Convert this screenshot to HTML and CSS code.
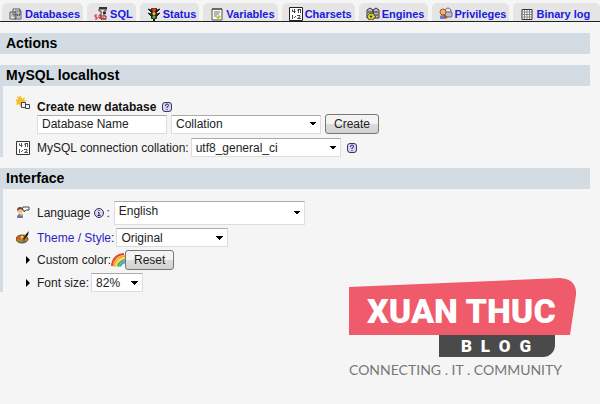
FILE: index.html
```html
<!DOCTYPE html>
<html lang="en">
<head>
<meta charset="utf-8">
<title>MySQL localhost</title>
<link rel="stylesheet" href="styles.css">
</head>
<body>
<nav class="tabs" aria-label="Server">
  <a class="tab" href="#databases"><svg class="icon" viewBox="0 0 14 14"><path d="M4 2h7v6H4zM1 5h6v7H1zM6 4h6v8H6z" fill="#f5f5f8" stroke="#555560"/><path d="M2 7h4M2 9h4M7 6h4M7 10h4" stroke="#888894"/><path d="M8 8h1M10 8h1" stroke="#222"/></svg>Databases</a>
  <a class="tab" href="#sql"><svg class="icon" viewBox="0 0 14 14"><path d="M5 2h7v2h-2v5h2v3H7V4H5z" fill="#ddd" stroke="#443d40"/><path d="M5 1h8M9 6h3" stroke="#333" stroke-width="2"/><path d="M3 8H1v2h2v2H1M5 8h2v3H5zM9 8v4h3M6 11l2 2" fill="none" stroke="#d21f2b"/></svg>SQL</a>
  <a class="tab" href="#status"><svg class="icon" viewBox="0 0 14 14"><path d="M1 2l3 1v2zM1 6l3 1v2zM13 2l-3 1v2zM13 6l-3 1v2z" fill="#222" stroke="#222"/><rect x="4" y="1" width="6" height="11" rx="1" fill="#252018"/><path d="M6 12h2v2H6z" fill="#111"/><circle cx="7" cy="3" r="2" fill="#e13a20"/><circle cx="7" cy="6.500" r="1.600" fill="#f2bd25"/><circle cx="7" cy="10" r="1.700" fill="#4db63c"/></svg>Status</a>
  <a class="tab" href="#variables"><svg class="icon" viewBox="0 0 14 14"><path d="M2 2h10v11H2z" fill="#f7f7ea" stroke="#555"/><path d="M3 1v2M5 1v2M7 1v2M9 1v2M11 1v2" stroke="#333"/><path d="M4 5h6M4 7h5M4 9h3" stroke="#777"/><path d="M6 11l3-3 2 2-3 2z" fill="#b5c832"/></svg>Variables</a>
  <a class="tab" href="#charsets"><svg class="icon" viewBox="0 0 14 14"><path d="M.5.500h13v13H.5z" fill="#fff" stroke="#222"/><path d="M3.500 2.500v2h3M5.500 2v4M12 2.500H9V4M9.500 2v4M11.500 2v4M3.500 8v4M5 11l2-2M8 8.500h3v1.500l-2.500 1.500H12" fill="none" stroke="#333" stroke-width=".9"/></svg>Charsets</a>
  <a class="tab" href="#engines"><svg class="icon" viewBox="0 0 14 14"><path d="M1 3l3-2 3 2v8H1zM7 3l3-2 3 2v8H7z" fill="#bbb" stroke="#333"/><path d="M2 5h4M8 5h4M8 8h4" stroke="#333"/><path d="M2 8l2-2 1 1 2-1 1 2 2 2-2 1-1 2-2-1-2 1-1-2-1-1z" fill="#d2d22c" stroke="#38370c" stroke-width=".7"/><circle cx="5" cy="9.500" r="1" fill="#222"/></svg>Engines</a>
  <a class="tab" href="#privileges"><svg class="icon" viewBox="0 0 14 14"><path d="M6 5V3q3-4 6 0v2" fill="none" stroke="#667"/><rect x="6" y="5" width="7" height="5" rx="1" fill="#b7bfcc" stroke="#667"/><circle cx="4" cy="5" r="3" fill="#f1b66d" stroke="#a25a26"/><path d="M1 12V9l2-1h3l1 4z" fill="#677fd0"/><path d="M5 8l3 3" stroke="#c94424" stroke-width="2"/></svg>Privileges</a>
  <a class="tab" href="#binlog"><svg class="icon" viewBox="0 0 14 14"><path d="M2 2.500h10v10H2z" fill="#fff" stroke="#333"/><path d="M4.500 3v9M7 3v9M9.500 3v9M2 5h10M2 7.500h10M2 10h10" stroke="#888"/></svg>Binary log</a>
</nav>
<main class="page">
  <section class="panel"><h2 class="title">Actions</h2></section>

  <section class="panel lined">
    <h2 class="title">MySQL localhost</h2>
    <form class="rows server">
      <div class="item">
        <svg class="icon lead" viewBox="0 0 14 14"><path d="M5 0l1 3 3-2-1 3 3 1-3 1 1 3-3-1-2 3-1-3-3 1 1-3-2-2 3-1-1-3 2 1z" fill="#f3bd2c"/><path d="M5.500 6.500h4v5h-4zM9.500 8.500h4v4h-4z" fill="#f4f4fa" stroke="#444450"/></svg>
        <div class="stack">
          <div class="line"><label class="strong" for="db">Create new database</label><a class="help" href="#help" aria-label="Documentation"><svg class="mark" viewBox="0 0 10 10"><rect x=".5" y=".5" width="9" height="9" rx="2.500" fill="#d3d3f5" stroke="#383860"/><path d="M3.500 4q0-2 1.500-2t1.500 1.500Q6.500 4.500 5 5v1M5 7v1" fill="none" stroke="#282858"/></svg></a></div>
          <div class="line fields"><input class="field name" id="db" value="Database Name"><select class="field coll" aria-label="Collation"><option>Collation</option></select><button class="button" type="button">Create</button></div>
        </div>
      </div>
      <div class="item middle">
        <svg class="icon lead" viewBox="0 0 14 14"><path d="M.5.500h13v13H.5z" fill="#fff" stroke="#333"/><path d="M3.500 2.500v2h3M5.500 2v4M12 2.500H9V4M9.500 2v4M11.500 2v4M3.500 8v4M5 11l2-2M8 8.500h3v1.500l-2.500 1.500H12" fill="none" stroke="#444" stroke-width=".9"/></svg>
        <div class="line tight"><label for="conn">MySQL connection collation:</label><select class="field coll" id="conn"><option>utf8_general_ci</option></select><a class="help" href="#help" aria-label="Documentation"><svg class="mark" viewBox="0 0 10 10"><rect x=".5" y=".5" width="9" height="9" rx="2.500" fill="#d3d3f5" stroke="#383860"/><path d="M3.500 4q0-2 1.500-2t1.500 1.500Q6.500 4.500 5 5v1M5 7v1" fill="none" stroke="#282858"/></svg></a></div>
      </div>
    </form>
  </section>

  <section class="panel lined">
    <h2 class="title">Interface</h2>
    <form class="rows interface">
      <div class="item middle">
        <svg class="icon lead" viewBox="0 0 14 14"><path d="M7 1h6v3h-3L8 6V4H6z" fill="#fff" stroke="#444"/><circle cx="4" cy="5" r="2.500" fill="#f2bb83"/><path d="M1 5q0-4 3-4t3 3L4 3z" fill="#67452f"/><path d="M1 12q0-4 3-4t3 4z" fill="#6873bb"/><path d="M4 9h3" stroke="#e29a53" stroke-width="2"/></svg>
        <div class="line"><label for="lang">Language</label><span class="info"><svg class="mark" viewBox="0 0 10 10"><circle cx="5" cy="5" r="4.500" fill="#d9d9f5" stroke="#303050"/><path d="M5 2v1M4 4.500h1V7M3.500 7.500h3" fill="none" stroke="#202050"/></svg>:</span><select class="field lang" id="lang"><option>English</option></select></div>
      </div>
      <div class="item middle">
        <svg class="icon lead" viewBox="0 0 14 14"><ellipse cx="6" cy="8" rx="6" ry="4" fill="#c77e25" stroke="#6b3d12"/><circle cx="3" cy="7" r="1.500" fill="#e8422b"/><circle cx="6" cy="6" r="1.300" fill="#f7d83c"/><circle cx="4" cy="10" r="1.300" fill="#53ae3c"/><circle cx="8" cy="10" r="1.300" fill="#5169cf"/><path d="M7 8l3-5 3-3-1 4-4 5z" fill="#222"/></svg>
        <div class="line tight"><label for="theme"><a class="link" href="#themes">Theme / Style</a>:</label><select class="field theme" id="theme"><option>Original</option></select></div>
      </div>
      <div class="item middle">
        <svg class="icon lead" viewBox="0 0 14 14"><path d="M10 3l4 4-4 4z" fill="#000"/></svg>
        <div class="line rainbow"><span>Custom color:</span><svg class="icon" viewBox="0 0 14 14" fill="none" stroke-width="2.200"><path d="M1 13Q2 2 13 1" stroke="#e5482d"/><path d="M3 13.500Q4 4 14 3" stroke="#f5a12d"/><path d="M5 13.500Q6 6 14 5" stroke="#f3dc53"/><path d="M7 13.500Q8 8 14 7" stroke="#58b34a"/><path d="M9 13.500Q10 10 14 9" stroke="#529fdd"/></svg><button class="button" type="button">Reset</button></div>
      </div>
      <div class="item middle">
        <svg class="icon lead" viewBox="0 0 14 14"><path d="M10 3l4 4-4 4z" fill="#000"/></svg>
        <div class="line tight"><label for="size">Font size:</label><select class="field size" id="size"><option>82%</option></select></div>
      </div>
    </form>
  </section>
</main>
<footer class="brand">
  <div class="banner"><svg class="shape" viewBox="0 0 227 57" preserveAspectRatio="none"><path d="M0 9L211 0Q228 1 227 17L221 57H0z" fill="#f05b6b"/></svg><span class="wordmark">XUAN THUC</span></div>
  <div class="blog"><span>B</span><span>L</span><span>O</span><span>G</span></div>
  <div class="motto">CONNECTING . IT . COMMUNITY</div>
</footer>
</body>
</html>
```
FILE: styles.css
```css
* { box-sizing: border-box; }
body {
  margin: 0;
  background: #f5f5f5;
  color: #222;
  font: 12px/14px "Liberation Sans", Arial, sans-serif;
}
a { color: #2a1fc4; text-decoration: none; }
.icon { width: 14px; height: 14px; flex: none; }
.tabs {
  display: flex;
  gap: 4px;
  padding: 3px 0 0 2px;
  border-bottom: 1px solid #222;
}
.tab {
  display: flex;
  align-items: center;
  gap: 2px;
  height: 18px;
  padding: 3px 3px 0 7px;
  border-radius: 5px 5px 0 0;
  background: #e5e5e5;
  color: #2018e0;
  font-size: 11px;
  font-weight: bold;
  white-space: nowrap;
}
.tab:last-child { flex: 1; }
.page {
  display: flex;
  flex-direction: column;
  gap: 11px;
  padding: 11px 10px 0 0;
}
.lined { border-left: 3px solid #d3dce3; }
.title {
  margin: 0;
  padding: 0 6px;
  background: #d3dce3;
  color: #000;
  font-size: 14px;
  line-height: 21px;
}
.lined .title { padding-left: 3px; }
.rows { display: flex; flex-direction: column; }
.server { gap: 4px; padding: 10px 0 0 13px; }
.interface { gap: 3px; padding: 12px 0 0 13px; }
.item { display: flex; gap: 7px; }
.middle { align-items: center; }
.stack { display: flex; flex-direction: column; padding-top: 4px; }
.line { display: flex; align-items: center; gap: 4px; }
.tight { gap: 2px; }
.rainbow { gap: 0; }
.strong { font-weight: bold; color: #111; margin-right: 2px; }
.help { display: flex; }
.line .coll + .help { margin-left: 4px; }
.info { display: flex; align-items: center; gap: 2px; }
.mark { width: 10px; height: 10px; }
.field {
  height: 19px;
  margin: 0;
  padding: 0 4px;
  border: 1px solid #ddd;
  border-top-color: #aaa;
  border-radius: 0;
  background-color: #fff;
  color: #222;
  font: inherit;
}
select.field {
  appearance: none;
  background-image:
    linear-gradient(225deg, #000 50%, transparent 50%),
    linear-gradient(135deg, #000 50%, transparent 50%);
  background-size: 4px 4px;
  background-repeat: no-repeat;
  background-position: right 7px center, right 3px center;
}
.name { width: 130px; }
.coll { width: 150px; }
.lang { width: 191px; height: 24px; padding-bottom: 4px; }
.theme { width: 112px; }
.size { width: 52px; }
.button {
  height: 20px;
  padding: 0 8px;
  border: 1px solid #777;
  border-radius: 3px;
  background: linear-gradient(#f3f3f3 50%, #dcdcdc 50%, #d2d2d2);
  color: #222;
  font: inherit;
}
.brand {
  display: flex;
  flex-direction: column;
  width: 227px;
  margin: -14px 24px 0 auto;
}
.banner { display: grid; }
.shape, .wordmark { grid-area: 1 / 1; }
.shape { width: 100%; height: 57px; }
.wordmark {
  padding: 13px 0 0 18px;
  color: #fff;
  font: 900 34px/40px Roboto, sans-serif;
  z-index: 1;
  white-space: nowrap;
}
.blog {
  display: flex;
  justify-content: space-between;
  width: 116px;
  padding: 0 24px 0 22px;
  margin-left: 90px;
  border-bottom-right-radius: 12px;
  background: #4a4a4a;
  color: #fff;
  font: 900 17px/22px Roboto, sans-serif;
}
.motto {
  margin-top: 3px;
  color: #777;
  font: 14px/20px Lato, sans-serif;
  white-space: nowrap;
}
```
